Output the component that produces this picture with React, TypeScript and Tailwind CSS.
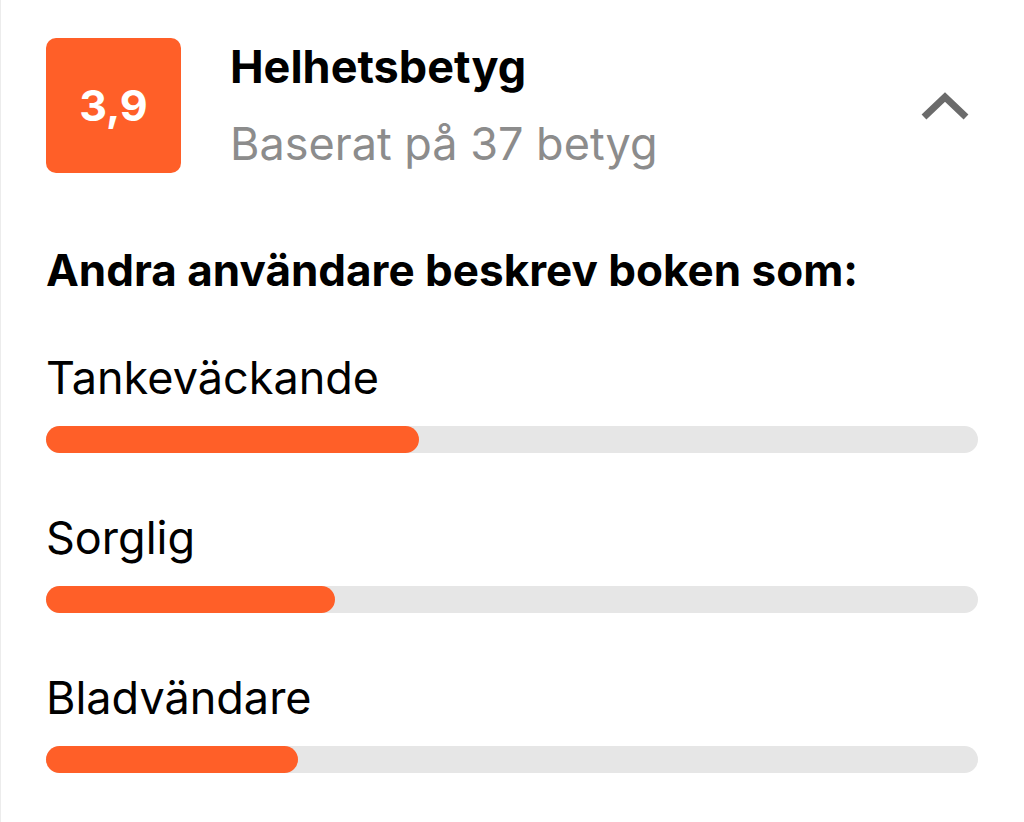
import { useState } from "react";

const traits = [
  { label: "Tankeväckande", pct: 40 },
  { label: "Sorglig", pct: 31 },
  { label: "Bladvändare", pct: 27 },
];

function Bar({ label, pct }: { label: string; pct: number }) {
  return (
    <div>
      <div className="text-[45px] leading-[54px] text-black">{label}</div>
      <div className="mt-[21px] h-[27px] w-full rounded-full bg-[#e6e6e6]">
        <div className="h-full rounded-full bg-[#ff5f28]" style={{ width: `${pct}%` }} />
      </div>
    </div>
  );
}

export default function App() {
  const [open, setOpen] = useState(true);

  return (
    <main
      className="min-h-screen w-full border-l border-[#ececec] bg-white pl-[45px] pr-[46px] pt-[38px]"
      style={{ fontFamily: "Inter, 'Noto Sans', sans-serif" }}
    >
      <div className="flex items-start">
        <div className="flex h-[135px] w-[135px] shrink-0 items-center justify-center rounded-[10px] bg-[#ff5f28]">
          <span className="text-[43px] font-bold text-white">3,9</span>
        </div>

        <div className="ml-[49px] flex-1 pt-[2px]">
          <h1 className="text-[45px] font-bold leading-[54px] text-black">Helhetsbetyg</h1>
          <p className="mt-[23px] text-[45px] leading-[54px] text-[#8c8c8c]">Baserat på 37 betyg</p>
        </div>

        <button onClick={() => setOpen(!open)} className="mr-[8px] mt-[54px] text-[#6b6b6b]">
          <svg width="50" height="30" viewBox="0 0 50 30" fill="none">
            <path
              d={open ? "M4 25 L25 5 L46 25" : "M4 5 L25 25 L46 5"}
              stroke="currentColor"
              strokeWidth="7"
            />
          </svg>
        </button>
      </div>

      {open && (
        <>
          <h2 className="mt-[71px] text-[44px] font-bold leading-[53px] text-black">
            Andra användare beskrev boken som:
          </h2>

          <div className="mt-[54px] flex flex-col gap-[58px]">
            {traits.map((t) => (
              <Bar key={t.label} label={t.label} pct={t.pct} />
            ))}
          </div>
        </>
      )}
    </main>
  );
}
